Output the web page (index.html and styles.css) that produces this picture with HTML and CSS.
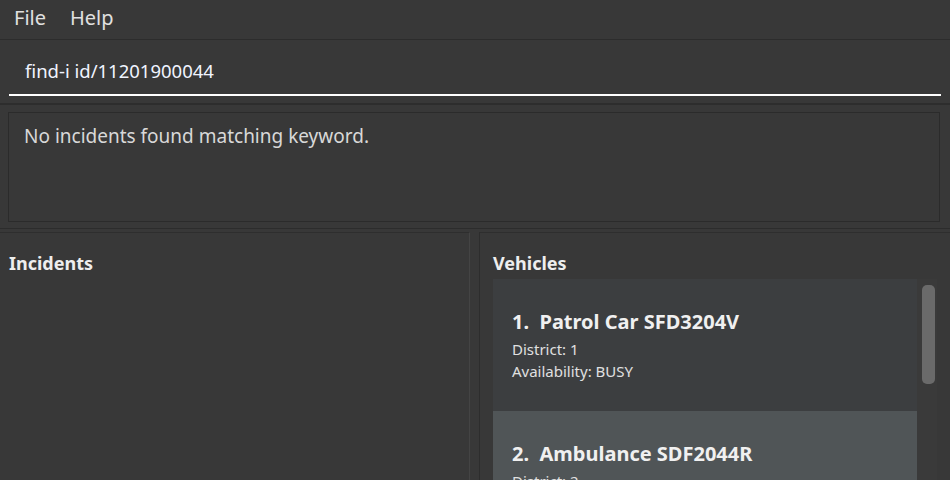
FILE: index.html
```html
<!DOCTYPE html>
<html>
<head>
<meta charset="utf-8">
<link rel="stylesheet" href="styles.css">
</head>
<body>
<div class="app">
  <div class="menubar">
    <span class="menu-item">File</span>
    <span class="menu-item">Help</span>
  </div>
  <div class="command">
    <div class="command-input">find-i id/11201900044</div>
  </div>
  <div class="result">
    <div class="result-box">No incidents found matching keyword.</div>
  </div>
  <div class="panes">
    <section class="pane pane-left">
      <h2 class="pane-title">Incidents</h2>
    </section>
    <div class="divider"></div>
    <section class="pane pane-right">
      <h2 class="pane-title">Vehicles</h2>
      <div class="list">
        <div class="cards">
          <div class="card">
            <div class="card-title">1.&nbsp; Patrol Car SFD3204V</div>
            <div class="card-line">District: 1</div>
            <div class="card-line">Availability: BUSY</div>
          </div>
          <div class="card card-alt">
            <div class="card-title">2.&nbsp; Ambulance SDF2044R</div>
            <div class="card-line">District: 2</div>
            <div class="card-line">Availability: AVAILABLE</div>
          </div>
        </div>
        <div class="scrollbar"><div class="thumb"></div></div>
      </div>
    </section>
  </div>
</div>
</body>
</html>
```
FILE: styles.css
```css
html, body {
  margin: 0;
  padding: 0;
  background: #383838;
  height: 480px;
  overflow: hidden;
}
.app {
  font-family: "Noto Sans", "Open Sans", sans-serif;
  color: #e6e6e6;
  display: flex;
  flex-direction: column;
  height: 480px;
}
.menubar {
  height: 39px;
  border-bottom: 1px solid #2c2c2c;
  display: flex;
  align-items: center;
  padding-left: 14px;
  gap: 24px;
  box-sizing: content-box;
}
.menu-item {
  font-size: 20px;
  color: #e0e0e0;
  line-height: 1;
  margin-top: -4px;
}
.command {
  padding: 12px 9px 0;
  border-bottom: 2px solid #2d2d2d;
  box-sizing: border-box;
  height: 65px;
}
.command-input {
  border-bottom: 2px solid #ffffff;
  padding-left: 16px;
  font-size: 18.5px;
  color: #f0f4ff;
  box-sizing: border-box;
  margin-top: -1px;
  height: 45px;
  line-height: 40px;
}
.result {
  padding: 7px 10px 6px 8px;
  border-bottom: 1px solid #2c2c2c;
}
.result-box {
  height: 110px;
  box-sizing: border-box;
  border: 1px solid #2b2b2b;
  padding: 7px 15px;
  font-size: 19px;
  color: #d8d8d8;
  line-height: 32px;
}
.panes {
  flex: 1;
  display: flex;
  padding-top: 3px;
  min-height: 0;
}
.pane {
  border-top: 1px solid #2e2e2e;
  min-height: 0;
  overflow: hidden;
}
.pane-left {
  border-right: 1px solid #444444;
  padding-left: 9px;
  box-sizing: border-box;
  width: 470px;
}
.divider {
  width: 9px;
}
.pane-right {
  flex: 1;
  border-left: 1px solid #2d2d2d;
  padding-left: 13px;
  padding-right: 13px;
  display: flex;
  flex-direction: column;
}
.pane-title {
  margin: 0;
  font-size: 18px;
  font-weight: bold;
  color: #eeeeee;
  line-height: 22px;
  padding-top: 19px;
  height: 46px;
  box-sizing: border-box;
}
.list {
  flex: 1;
  display: flex;
  background: #3a3a3a;
  min-height: 0;
}
.cards {
  width: 425px;
  display: flex;
  flex-direction: column;
}
.card {
  height: 132px;
  flex-shrink: 0;
  background: #3c3e40;
  padding: 30px 19px 0;
  box-sizing: border-box;
}
.card-alt {
  background: #505557;
}
.card-title {
  font-size: 20px;
  font-weight: bold;
  color: #f0f0f0;
  line-height: 26px;
  margin-bottom: 3px;
}
.card-line {
  font-size: 15px;
  color: #e0e0e0;
  line-height: 22px;
}
.scrollbar {
  flex: 1;
  padding: 6px 2px 0 4px;
}
.thumb {
  width: 13px;
  height: 99px;
  background: #6a6a6a;
  border-radius: 5px;
  margin-left: 1px;
}
```
